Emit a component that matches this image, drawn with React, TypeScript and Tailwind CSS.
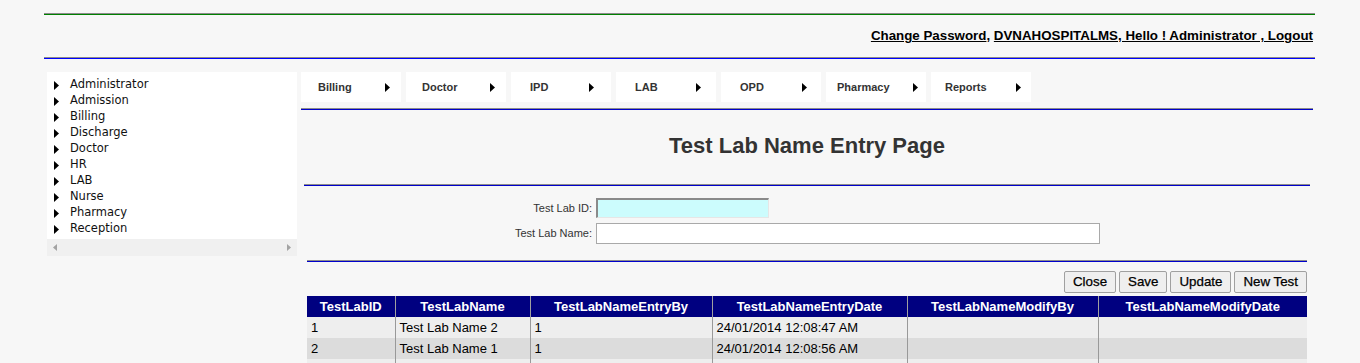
import React from "react";

const sideMenu = [
  "Administrator",
  "Admission",
  "Billing",
  "Discharge",
  "Doctor",
  "HR",
  "LAB",
  "Nurse",
  "Pharmacy",
  "Reception",
];

// text inset and label width differ a little per tab in the original
const topMenu = [
  { label: "Billing", pad: "pl-[17px]", w: "w-[67px]" },
  { label: "Doctor", pad: "pl-[16px]", w: "w-[68px]" },
  { label: "IPD", pad: "pl-[19px]", w: "w-[59px]" },
  { label: "LAB", pad: "pl-[19px]", w: "w-[61px]" },
  { label: "OPD", pad: "pl-[19px]", w: "w-[62px]" },
  { label: "Pharmacy", pad: "pl-[11px]", w: "w-[76px]" },
  { label: "Reports", pad: "pl-[14px]", w: "w-[71px]" },
];

const columns = [
  { label: "TestLabID", w: "w-[88px]" },
  { label: "TestLabName", w: "w-[135px]" },
  { label: "TestLabNameEntryBy", w: "w-[182px]" },
  { label: "TestLabNameEntryDate", w: "w-[195px]" },
  { label: "TestLabNameModifyBy", w: "w-[191px]" },
  { label: "TestLabNameModifyDate", w: "w-[209px]" },
];

const rows = [
  ["1", "Test Lab Name 2", "1", "24/01/2014 12:08:47 AM", "", ""],
  ["2", "Test Lab Name 1", "1", "24/01/2014 12:08:56 AM", "", ""],
  ["", "", "", "", "", ""],
];

function Arrow({ color = "#000" }: { color?: string }) {
  return (
    <svg width="5" height="9" viewBox="0 0 5 9" className="shrink-0">
      <path d="M0 0 L5 4.5 L0 9 Z" fill={color} />
    </svg>
  );
}

// gray 1px over a coloured 1px, like the old <hr> rules
function Rule({ color, className = "" }: { color: "green" | "blue" | "navy"; className?: string }) {
  const bottom = color === "green" ? "bg-[#008000]" : color === "blue" ? "bg-[#0000ff]" : "bg-[#0000cc]";
  return (
    <div className={className}>
      <div className="h-px bg-[#8c8c8c]" />
      <div className={`h-px ${bottom}`} />
    </div>
  );
}

export default function App() {
  return (
    <div className="min-h-screen bg-[#f7f7f7] font-['Liberation_Sans',Arial,sans-serif] text-black">
      <div className="ml-[44px] w-[1271px] pt-[13px]">
        <Rule color="green" />
        <div className="flex h-[42px] items-center justify-end pr-[2px] text-[13.33px] font-bold">
          <a className="underline">Change Password</a>
          <span>,&nbsp;</span>
          <a className="underline">DVNAHOSPITALMS, Hello ! Administrator , Logout</a>
        </div>
        <Rule color="blue" />

        <div className="mt-[13px] flex items-start">
          {/* side menu */}
          <div className="ml-[3px] w-[250px] bg-white font-['DejaVu_Sans',Verdana,sans-serif] text-[11.5px] text-[#111]">
            <ul className="pt-[5px] pb-[2px]">
              {sideMenu.map((m) => (
                <li key={m} className="flex h-[16px] items-center">
                  <span className="ml-[7px] mr-[11px]">
                    <Arrow />
                  </span>
                  {m}
                </li>
              ))}
            </ul>
            <div className="flex h-[17px] items-center justify-between bg-[#f0f0f0] px-[6px]">
              <svg width="4" height="7" viewBox="0 0 4 7">
                <path d="M4 0 L0 3.5 L4 7 Z" fill="#a3a3a3" />
              </svg>
              <svg width="4" height="7" viewBox="0 0 4 7">
                <path d="M0 0 L4 3.5 L0 7 Z" fill="#a3a3a3" />
              </svg>
            </div>
          </div>

          {/* main */}
          <div className="ml-[4px] w-[1012px]">
            <div className="flex gap-[5px]">
              {topMenu.map((m) => (
                <div
                  key={m.label}
                  className={`flex h-[30px] w-[100px] items-center bg-white ${m.pad} pt-[1px] text-[11px] font-bold text-[#333]`}
                >
                  <span className={m.w}>{m.label}</span>
                  <Arrow />
                </div>
              ))}
            </div>
            <Rule color="navy" className="mt-[6px]" />

            <div className="flex h-[74px] items-center justify-center pb-[4px] text-[22px] font-bold text-[#333]">
              Test Lab Name Entry Page
            </div>

            <Rule color="navy" className="mx-[3px]" />

            <div className="mx-[3px] grid grid-cols-[288px_auto] items-center gap-x-[4px] gap-y-[5px] pt-[12px] pb-[16px] text-[11px] text-[#333]">
              <label className="text-right">Test Lab ID:</label>
              <input className="h-[20px] w-[173px] border-t-2 border-l-2 border-r border-b border-t-[#8a8a8a] border-l-[#8a8a8a] border-r-[#e6e6e6] border-b-[#e6e6e6] bg-[#ccfcfd] outline-none" />
              <label className="text-right">Test Lab Name:</label>
              <input className="h-[21px] w-[504px] border border-[#a9a9a9] bg-white outline-none" />
            </div>

            <Rule color="navy" className="mx-[6px]" />

            <div className="mx-[6px] flex justify-end gap-[3px] pt-[9px] pb-[3px] text-[13.33px]">
              {["Close", "Save", "Update", "New Test"].map((b) => (
                <button
                  key={b}
                  className="h-[22px] rounded-[2px] border border-[#a0a0a0] bg-[#efefef] px-[8px] leading-none text-black [-webkit-text-stroke:0.25px_black]"
                >
                  {b}
                </button>
              ))}
            </div>

            <table className="mx-[6px] w-[1000px] table-fixed border-collapse text-[13px]">
              <thead>
                <tr className="h-[21px] bg-[#000080] text-white">
                  {columns.map((c, i) => (
                    <th
                      key={c.label}
                      className={`${c.w} ${i > 0 ? "border-l border-l-[#a0a0a0]" : ""} p-0 text-center font-bold`}
                    >
                      {c.label}
                    </th>
                  ))}
                </tr>
              </thead>
              <tbody>
                {rows.map((r, ri) => (
                  <tr key={ri} className={`h-[21px] ${ri % 2 === 0 ? "bg-[#eeeeee]" : "bg-[#dcdcdc]"}`}>
                    {r.map((cell, ci) => (
                      <td
                        key={ci}
                        className={`${ci > 0 ? "border-l border-l-[#999]" : ""} px-[4px] py-0 whitespace-nowrap`}
                      >
                        {cell}
                      </td>
                    ))}
                  </tr>
                ))}
              </tbody>
            </table>
          </div>
        </div>
      </div>
    </div>
  );
}
